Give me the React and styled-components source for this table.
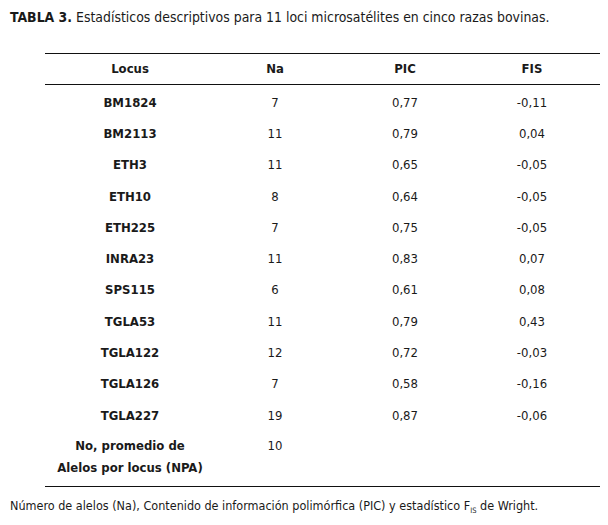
import React from "react";
import styled, { createGlobalStyle } from "styled-components";

const rows = [
  ["BM1824", "7", "0,77", "-0,11"],
  ["BM2113", "11", "0,79", "0,04"],
  ["ETH3", "11", "0,65", "-0,05"],
  ["ETH10", "8", "0,64", "-0,05"],
  ["ETH225", "7", "0,75", "-0,05"],
  ["INRA23", "11", "0,83", "0,07"],
  ["SPS115", "6", "0,61", "0,08"],
  ["TGLA53", "11", "0,79", "0,43"],
  ["TGLA122", "12", "0,72", "-0,03"],
  ["TGLA126", "7", "0,58", "-0,16"],
  ["TGLA227", "19", "0,87", "-0,06"],
];

const GlobalStyle = createGlobalStyle`
  body {
    margin: 0;
    background: #fff;
    color: #1a1a1a;
    font-family: "Liberation Sans Narrow", "Arial Narrow", "DejaVu Sans Condensed", sans-serif;
  }
`;

const Page = styled.div`
  width: 608px;
  height: 525px;
  padding: 9px 0 0 10px;
  box-sizing: border-box;
`;

const Title = styled.div`
  font-size: 13.9px;
  line-height: 17px;
  b {
    font-weight: 700;
  }
`;

const Table = styled.div`
  margin: 27px 8px 0 35px;
  border-top: 1.5px solid #111;
  border-bottom: 1.5px solid #111;
`;

const Row = styled.div`
  display: grid;
  grid-template-columns: 170px 120px 140px 114px 1fr;
  align-items: center;
  height: ${(p) => p.$h || 31.3}px;
  font-size: 13px;
  ${(p) => p.$head && "border-bottom: 1.5px solid #111;"}
`;

const LastRow = styled(Row)`
  align-items: start;
  padding-top: 4px;
`;

const Body = styled.div`
  padding: 2px 0 3px;
`;

const Cell = styled.div`
  text-align: center;
  font-weight: ${(p) => (p.$bold ? 700 : 400)};
  line-height: 22px;
`;

const Note = styled.div`
  margin-top: 11px;
  font-size: 12.5px;
  sub {
    font-size: 7.5px;
    vertical-align: -3px;
  }
`;

export default function App() {
  return (
    <Page>
      <GlobalStyle />
      <Title>
        <b>TABLA 3.</b> Estadísticos descriptivos para 11 loci microsatélites en cinco razas bovinas.
      </Title>
      <Table>
        <Row $head $h={30}>
          <Cell $bold>Locus</Cell>
          <Cell $bold>Na</Cell>
          <Cell $bold>PIC</Cell>
          <Cell $bold>FIS</Cell>
        </Row>
        <Body>
          {rows.map((r) => (
            <Row key={r[0]}>
              <Cell $bold>{r[0]}</Cell>
              <Cell>{r[1]}</Cell>
              <Cell>{r[2]}</Cell>
              <Cell>{r[3]}</Cell>
            </Row>
          ))}
          <LastRow $h={48}>
            <Cell $bold>
              No, promedio de
              <br />
              Alelos por locus (NPA)
            </Cell>
            <Cell>10</Cell>
            <Cell />
            <Cell />
          </LastRow>
        </Body>
      </Table>
      <Note>
        Número de alelos (Na), Contenido de información polimórfica (PIC) y estadístico F<sub>IS</sub> de Wright.
      </Note>
    </Page>
  );
}
